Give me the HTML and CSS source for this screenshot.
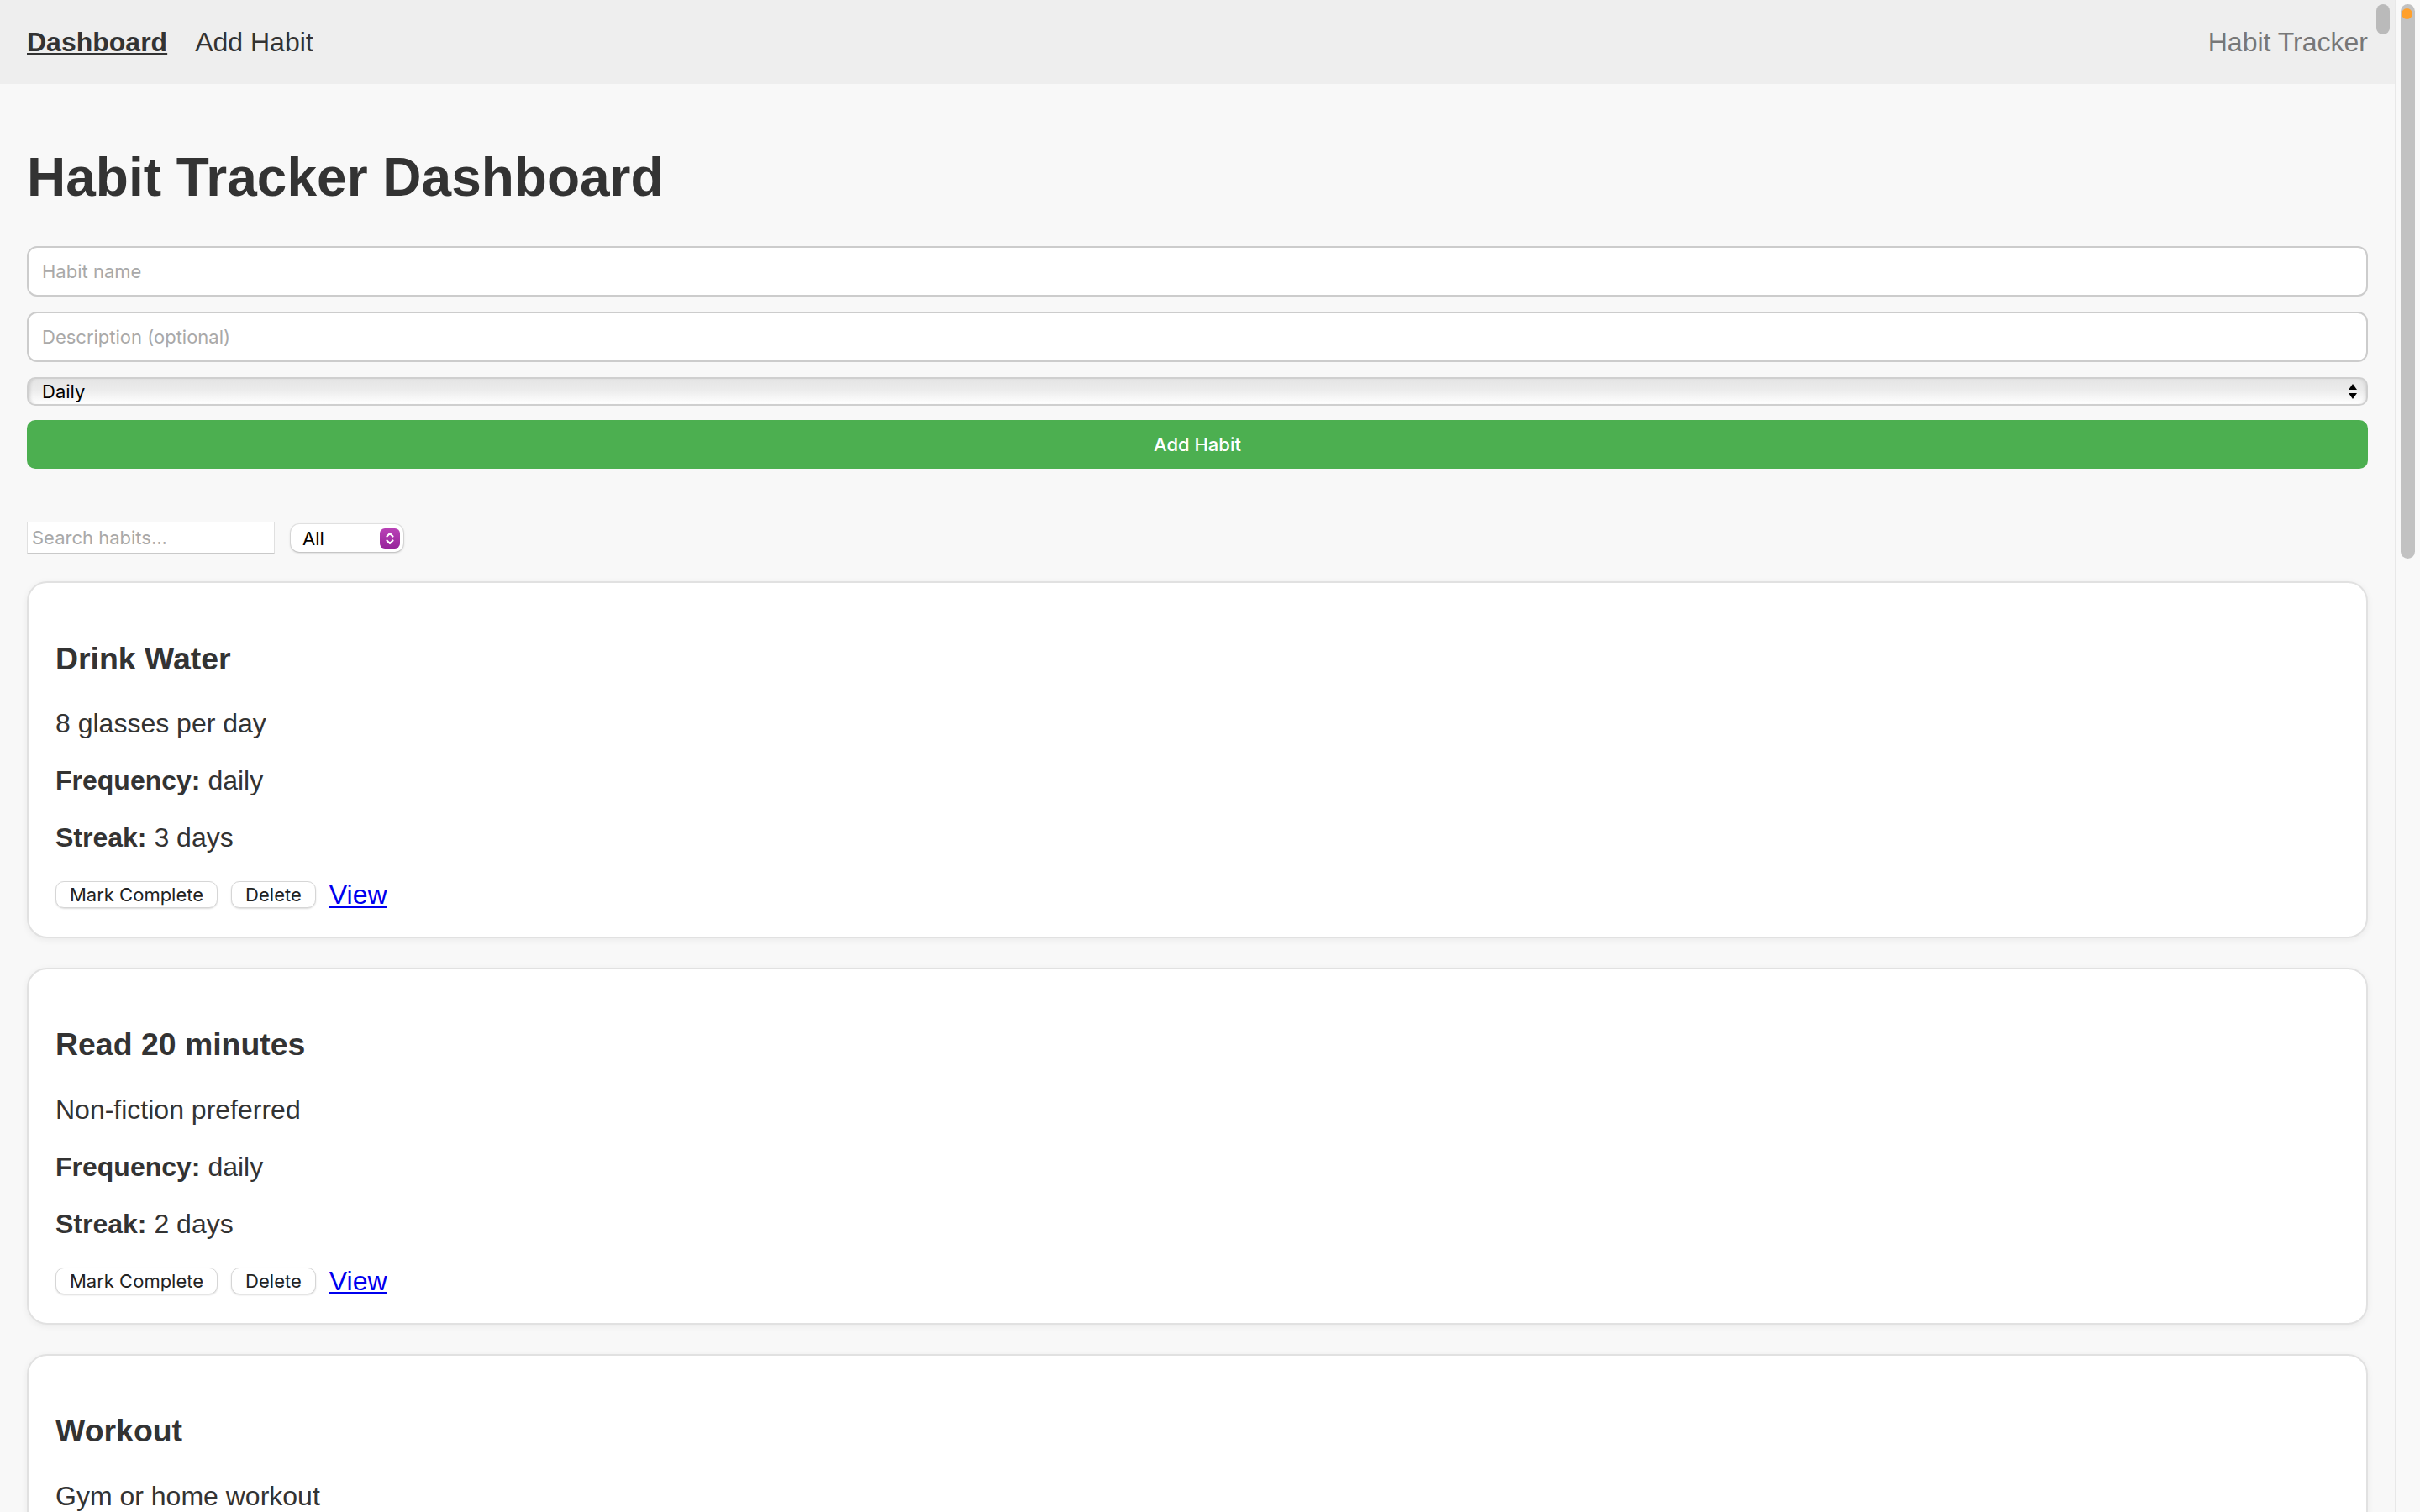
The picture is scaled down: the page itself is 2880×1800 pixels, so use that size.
FILE: index.html
```html
<!DOCTYPE html>
<html lang="en">
<head>
<meta charset="utf-8">
<title>Habit Tracker</title>
<link rel="stylesheet" href="styles.css">
</head>
<body>
<div class="window">
  <div class="page">
    <header class="topbar">
      <nav class="nav">
        <a class="nav-link active" href="#">Dashboard</a>
        <a class="nav-link" href="#">Add Habit</a>
      </nav>
      <span class="brand">Habit Tracker</span>
      <span class="overlay-pill"></span>
    </header>
    <main class="content">
      <h1 class="title">Habit Tracker Dashboard</h1>
      <form class="habit-form">
        <input class="field" type="text" placeholder="Habit name">
        <input class="field" type="text" placeholder="Description (optional)">
        <div class="freq-select">
          <select class="native-select freq-native">
            <option>Daily</option>
            <option>Weekly</option>
          </select>
          <svg class="updown" width="10" height="18" viewBox="0 0 10 18">
            <polygon points="0,7 5,0 10,7" fill="#000"/>
            <polygon points="0,11 10,11 5,18" fill="#000"/>
          </svg>
        </div>
        <button class="add-btn" type="button">Add Habit</button>
      </form>
      <div class="filters">
        <input class="search" type="text" placeholder="Search habits...">
        <div class="filter-select">
          <select class="native-select filter-native">
            <option>All</option>
            <option>Daily</option>
            <option>Weekly</option>
          </select>
          <span class="filter-arrow">
            <svg width="12" height="18" viewBox="0 0 12 18">
              <path d="M2.5 6.5 L6 3 L9.5 6.5" fill="none" stroke="#fff" stroke-width="2.2" stroke-linecap="round" stroke-linejoin="round"/>
              <path d="M2.5 11.5 L6 15 L9.5 11.5" fill="none" stroke="#fff" stroke-width="2.2" stroke-linecap="round" stroke-linejoin="round"/>
            </svg>
          </span>
        </div>
      </div>
      <div class="habit-list">
        <article class="card">
          <h3 class="card-title">Drink Water</h3>
          <p class="card-text">8 glasses per day</p>
          <p class="card-text"><strong>Frequency:</strong> daily</p>
          <p class="card-text"><strong>Streak:</strong> 3 days</p>
          <div class="actions">
            <button class="btn" type="button">Mark Complete</button>
            <button class="btn" type="button">Delete</button>
            <a class="view-link" href="#">View</a>
          </div>
        </article>
        <article class="card">
          <h3 class="card-title">Read 20 minutes</h3>
          <p class="card-text">Non-fiction preferred</p>
          <p class="card-text"><strong>Frequency:</strong> daily</p>
          <p class="card-text"><strong>Streak:</strong> 2 days</p>
          <div class="actions">
            <button class="btn" type="button">Mark Complete</button>
            <button class="btn" type="button">Delete</button>
            <a class="view-link" href="#">View</a>
          </div>
        </article>
        <article class="card">
          <h3 class="card-title">Workout</h3>
          <p class="card-text">Gym or home workout</p>
          <p class="card-text"><strong>Frequency:</strong> weekly</p>
          <p class="card-text"><strong>Streak:</strong> 1 days</p>
          <div class="actions">
            <button class="btn" type="button">Mark Complete</button>
            <button class="btn" type="button">Delete</button>
            <a class="view-link" href="#">View</a>
          </div>
        </article>
      </div>
    </main>
  </div>
  <aside class="scrollbar">
    <div class="thumb"><span class="dot"></span></div>
  </aside>
</div>
</body>
</html>
```

FILE: styles.css
```css
html, body {
  margin: 0;
  height: 100%;
  overflow: hidden;
}

body {
  font-family: "Liberation Sans", Arial, Helvetica, sans-serif;
  color: #333;
  background: #f8f8f8;
}

.window {
  display: flex;
  height: 1800px;
}

.page {
  flex: 1;
  min-width: 0;
  display: flex;
  flex-direction: column;
  overflow: hidden;
}

/* Header */
.topbar {
  position: relative;
  flex: none;
  height: 100px;
  box-sizing: border-box;
  padding: 0 32px;
  background: #eeeeee;
  display: flex;
  align-items: center;
  justify-content: space-between;
  font-size: 32px;
}

.nav {
  display: flex;
  gap: 33px;
}

.nav-link {
  color: #333;
  text-decoration: none;
}

.nav-link.active {
  font-weight: bold;
  text-decoration: underline;
}

.brand {
  color: #777;
}

.overlay-pill {
  position: absolute;
  top: 5px;
  right: 6px;
  width: 16px;
  height: 36px;
  border-radius: 8px;
  background: #bababa;
}

/* Main */
.content {
  padding: 32px 32px 0;
}

.title {
  font-size: 64px;
  font-weight: bold;
  margin: 42px 0 45px;
}

.habit-form {
  display: flex;
  flex-direction: column;
  gap: 18px;
}

.field {
  display: block;
  height: 60px;
  box-sizing: border-box;
  border: 2px solid #cccccc;
  border-radius: 12px;
  padding: 0 16px;
  background: #fff;
  font-family: Inter, "Noto Sans", sans-serif;
  font-size: 22px;
  color: #333;
  outline: none;
}

.field::placeholder,
.search::placeholder {
  color: #a9a9a9;
}

.native-select {
  -webkit-appearance: none;
  appearance: none;
  border: 0;
  margin: 0;
  padding: 0;
  background: transparent;
  font-family: Inter, "Noto Sans", sans-serif;
  font-size: 22px;
  color: #000;
  outline: none;
  flex: 1;
  min-width: 0;
}

.freq-select {
  height: 34px;
  box-sizing: border-box;
  border: 2px solid #cfcfcf;
  border-radius: 10px;
  background: linear-gradient(#e4e4e4 0%, #ececec 45%, #ffffff 100%);
  box-shadow: inset 4px 0 4px -3px rgba(0, 0, 0, 0.18), inset -4px 0 4px -3px rgba(0, 0, 0, 0.12);
  display: flex;
  align-items: center;
  padding: 0 11px 0 16px;
}

.updown {
  flex: none;
}

.add-btn {
  height: 58px;
  margin-top: -1px;
  border: 0;
  border-radius: 10px;
  background: #4caf50;
  color: #fff;
  font-family: Inter, "Noto Sans", sans-serif;
  font-size: 22px;
  font-weight: 500;
}

/* Filters */
.filters {
  display: flex;
  align-items: center;
  gap: 19px;
  margin-top: 63px;
}

.search {
  width: 295px;
  height: 39px;
  box-sizing: border-box;
  border: 1px solid #e0e0e0;
  border-bottom: 2px solid #c9c9c9;
  padding: 0 5px;
  background: #fff;
  font-family: Inter, "Noto Sans", sans-serif;
  font-size: 22px;
  outline: none;
}

.filter-select {
  width: 134px;
  height: 33px;
  box-sizing: border-box;
  background: #fff;
  border-radius: 10px;
  box-shadow: 0 0 0 1px rgba(0, 0, 0, 0.07), 0 1px 3px rgba(0, 0, 0, 0.22);
  display: flex;
  align-items: center;
  padding: 0 4px 0 14px;
}

.filter-arrow {
  flex: none;
  width: 24px;
  height: 24px;
  border-radius: 6px;
  background: linear-gradient(#b941b6, #97249b);
  display: flex;
  align-items: center;
  justify-content: center;
}

/* Cards */
.habit-list {
  margin-top: 32px;
}

.card {
  background: #fff;
  border: 2px solid #e1e1e1;
  border-radius: 24px;
  padding: 32px;
  margin-bottom: 35px;
  box-shadow: 0 2px 8px rgba(0, 0, 0, 0.06);
}

.card-title {
  font-size: 37.44px;
  font-weight: bold;
  margin: 36.5px 0 37.44px;
}

.card-text {
  font-size: 32px;
  line-height: 36px;
  margin: 0 0 32px;
}

.actions {
  display: flex;
  align-items: center;
  gap: 16px;
  height: 36px;
}

.btn {
  height: 32px;
  box-sizing: border-box;
  padding: 0 16px;
  border: 1px solid #d6d6d6;
  border-radius: 10px;
  background: #fff;
  color: #222;
  font-family: Inter, "Noto Sans", sans-serif;
  font-size: 22px;
  box-shadow: 0 1px 2px rgba(0, 0, 0, 0.14);
}

.view-link {
  font-size: 32px;
  line-height: 36px;
  color: #0000ee;
  text-decoration: underline;
}

/* Fake window scrollbar */
.scrollbar {
  flex: none;
  width: 30px;
  box-sizing: border-box;
  border-left: 2px solid #e8e8e8;
  background: #f9f9f9;
  padding: 5px 0 0 5px;
}

.thumb {
  width: 17px;
  height: 660px;
  border-radius: 9px;
  background: #c2c2c2;
  box-sizing: border-box;
  padding: 5px 0 0 1px;
}

.dot {
  display: block;
  width: 13px;
  height: 13px;
  border-radius: 50%;
  background: #ffa02c;
}
```
